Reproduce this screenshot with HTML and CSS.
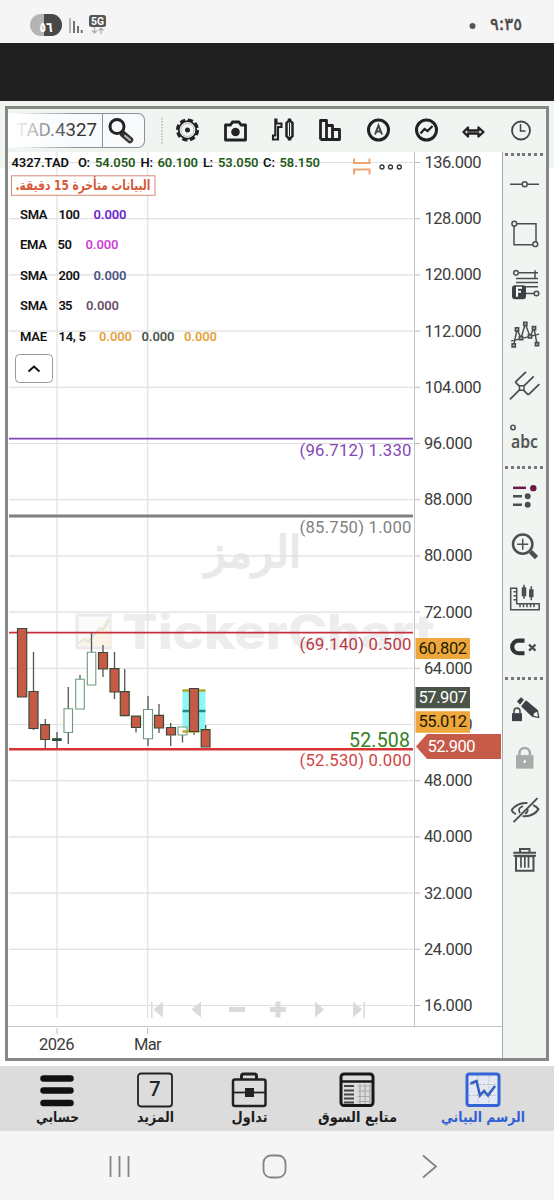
FILE: index.html
```html
<!DOCTYPE html>
<html lang="ar">
<head>
<meta charset="utf-8">
<title>TickerChart</title>
<link rel="stylesheet" href="styles.css">
</head>
<body>
<header class="status">
  <svg width="554" height="43" viewBox="0 0 554 43">
    <rect x="30" y="14" width="32" height="22" rx="11" fill="#b4b4b4"/>
    <path d="M44 14h7a11 11 0 0 1 0 22h-7z" fill="#484848"/>
    <text class="ar" x="39.5" y="32" font-size="14" font-weight="700" fill="#fff" textLength="13" lengthAdjust="spacingAndGlyphs">٥٦</text>
    <path d="M70 18v15" stroke="#b5b5b5" stroke-width="2"/>
    <path d="M74 21v12M78 26v7M81.7 30v3" stroke="#666" stroke-width="1.8"/>
    <rect x="89" y="15" width="17" height="12" rx="2.5" fill="#555"/>
    <text class="rb" x="91" y="25" font-size="11.5" font-weight="700" fill="#fff" textLength="13" lengthAdjust="spacingAndGlyphs">5G</text>
    <path d="M94.500 27v6m-2.500-2.500l2.500 2.500 2.500-2.500M101 34v-6m-2.500 2.500l2.500-2.500 2.500 2.500" fill="none" stroke="#aaa" stroke-width="1.200"/>
    <circle cx="472.500" cy="26" r="3" fill="#555"/>
    <text class="ar" x="490" y="30" font-size="17" fill="#444" stroke="#444" stroke-width=".5" textLength="32" lengthAdjust="spacingAndGlyphs">٩:٣٥</text>
  </svg>
</header>
<div class="band"></div>
<main class="stage">
  <section class="frame">
    <div class="toolbar">
      <div class="search">
        <span class="symbol">TAD.4327</span>
        <span class="find"><svg width="40" height="33" viewBox="0 0 40 33"><path d="M20 20l7 6" stroke="#333" stroke-width="6.500" stroke-linecap="round"/><path d="M22 21.800l5 4.200" stroke="#bbb" stroke-width="2" stroke-linecap="round"/><circle cx="14" cy="12.500" r="7" fill="#f6f8fb" stroke="#222" stroke-width="3"/></svg></span>
      </div>
      <svg class="tools" width="385" height="43" viewBox="153 109 385 43">
        <path d="M162 118v26" stroke="#999" stroke-dasharray="1.500 1.500"/>
        <g fill="none" stroke="#222">
          <circle cx="187.500" cy="130" r="10" stroke-width="3.200" stroke-dasharray="5.200 2.654"/><circle cx="187.500" cy="130" r="8.800" stroke-width="1.800"/><circle cx="187.500" cy="130" r="6.500" stroke="#bbb" stroke-width="1"/><circle cx="187.500" cy="130" r="2.500" fill="#222" stroke="none"/>
          <path d="M225.500 125h5l2-3h6.500l2 3h4.500v15h-20z" stroke-width="2.800" stroke-linejoin="round"/><circle cx="235.500" cy="132" r="4.300" fill="#222" stroke="none"/>
          <path d="M276.500 119.500v4h5v3.500h-3.500v12.500h-5v-4h2.300v-16z" stroke-width="2.100"/><path d="M289.500 118.500v3m0 16v3" stroke-width="3.500"/><path d="M286.500 123q3-4 6 0v13q-3 4-6 0z" stroke-width="2.500"/><path d="M289.500 123v13" stroke-width="1"/>
          <path d="M320.500 139.500v-19h6v19m0 0v-14h6v14m0 0v-10h7v10h-19" stroke-width="2.800" stroke-linejoin="round"/>
          <circle cx="378.500" cy="130" r="10" stroke-width="3"/><path d="M375 134.500l3.500-9 3.500 9M376 131.500h5" stroke-width="2" stroke="#444"/>
          <circle cx="426.500" cy="130" r="10" stroke-width="3"/><path d="M420.500 133.500l4-4.500 3 2 5-5" stroke-width="2.200"/>
          <path d="M463.500 132l4.500-4.500v3h10.500v-3l5 4.500-5 4.500v-3h-10.500v3z" fill="#ddd" stroke-width="2.300" stroke-linejoin="round"/>
          <circle cx="521" cy="130.500" r="9" stroke-width="1.800" stroke="#444"/><path d="M520.500 124v7h5" stroke-width="1.500" stroke="#444"/>
        </g>
      </svg>
    </div>
    <div class="work">
      <svg class="chart" width="494" height="906" viewBox="8 152 494 906">
        <g class="mark">
          <text class="ar" x="205" y="567" font-size="43" textLength="96" lengthAdjust="spacingAndGlyphs" stroke="#e9e9e9" stroke-width="2">الرمز</text>
          <path d="M77 615h33v33h-33z" fill="#fbfbfb" stroke="#eaeaea" stroke-width="3"/>
          <path d="M79 646l8-9 7 1 12-20 4 5v23z" fill="#fbf3e6"/>
          <path d="M79 643l5-4 4 3 12-14 3 2 6-11" fill="none" stroke="#e6e3dc" stroke-width="2"/>
          <text class="brand" x="122" y="649" font-size="48" textLength="313" lengthAdjust="spacingAndGlyphs">TickerChart</text>
        </g>
        <path class="grid" d="M57 152v866M147.700 152v866M9 162.500h404M9 218.700h404M9 274.900h404M9 331.100h404M9 387.300h404M9 443.500h404M9 499.700h404M9 555.900h404M9 612.100h404M9 668.300h404M9 724.500h404M9 780.700h404M9 836.900h404M9 893.100h404M9 949.300h404M9 1005.500h404"/>
        <path d="M414.500 152v874M8 1026.500h494" stroke="#c4c4c4" fill="none"/>
        <path d="M415 162.500h5M415 218.700h5M415 274.900h5M415 331.100h5M415 387.300h5M415 443.500h5M415 499.700h5M415 555.900h5M415 612.100h5M415 668.300h5M415 780.700h5M415 836.900h5M415 893.100h5M415 949.300h5M415 1005.500h5M57 1028v6M147.700 1028v6" stroke="#bbb" fill="none"/>
        <g class="scale">
          <text x="424.500" y="168" textLength="57">136.000</text><text x="424.500" y="224" textLength="57">128.000</text><text x="424.500" y="280.300" textLength="57">120.000</text><text x="424.500" y="336.500" textLength="57">112.000</text><text x="424.500" y="392.700" textLength="57">104.000</text>
          <text x="424" y="449" textLength="48.500">96.000</text><text x="424" y="505.200" textLength="48.500">88.000</text><text x="424" y="561.400" textLength="48.500">80.000</text><text x="424" y="617.600" textLength="48.500">72.000</text><text x="424" y="673.800" textLength="48.500">64.000</text><text x="424" y="730" textLength="48.500">56.000</text><text x="424" y="786.200" textLength="48.500">48.000</text><text x="424" y="842.400" textLength="48.500">40.000</text><text x="424" y="898.600" textLength="48.500">32.000</text><text x="424" y="954.800" textLength="48.500">24.000</text><text x="424" y="1011" textLength="48.500">16.000</text>
          <text x="39" y="1049.700" textLength="35.500">2026</text><text x="134" y="1049.700" textLength="27.500">Mar</text>
        </g>
        <g fill="#dadada">
          <path d="M151 1002h1.500v16h-1.500zM163 1001.500v16l-9.500-8zM201 1001.500v16l-9.500-8zM229 1007h16v5h-16zM270 1007h5.500v-5.500h5v5.500h5.500v5h-5.500v5.500h-5v-5.500h-5.500zM315 1001.500v16l9-8zM353 1001.500v16l9-8zM363.500 1002h1.500v16h-1.500z"/>
        </g>
        <g fill="none">
          <path d="M9 438.700h404" stroke="#8344b8" stroke-width="1.700"/>
          <path d="M9 516h404" stroke="#808080" stroke-width="2.800"/>
          <path d="M9 632.600h404" stroke="#c4303a" stroke-width="1.600"/>
        </g>
        <path d="M182.500 690h23v42h-23z" fill="#8ff6f6"/>
        <path d="M182.500 711h23" stroke="#278a8a" stroke-width="2.500"/>
        <path class="wick" d="M33.500 652v78M45.300 719v30M57 732v17M68.300 687v22M68.300 732v12M80 675v4M91.500 633v19M103 645v32M114.500 652v47M124.700 669v25M136 720v12.500M148 696v14M148 739v7M159 704v29M170.700 723v23M182.500 735v7.500M194 725v10M205.700 725v10"/>
        <g class="up"><path d="M64 708.700h8.500v23.800H64zM75.700 679.300h8.600v29.700h-8.600zM87.300 652.300h8.500v32.700h-8.500zM143.500 709.500h9v29.300h-9zM178 727h9v8h-9z"/></g>
        <path d="M182.500 690.500h23M182.500 731.500h17" stroke="#b8a52c" stroke-width="2.500"/>
        <g class="down"><path d="M17.500 628.500h9.200v68.500h-9.200zM29 691.500h9v37h-9zM40.700 724.700h8.800v14.800h-8.800zM98.500 652.500h9v16.500h-9zM110 668.700h9v23.300h-9zM120.300 691.700h8.900v24h-8.900zM131.500 716.200h9v11.300h-9zM154.500 715.300h9v12.700h-9zM166.500 727.500h9v7.500h-9zM189.500 688.500h9v43h-9zM201.200 729.700h8.800v17.300h-8.800z"/></g>
        <path d="M52 738.200h9.700v2.800H52z" fill="#28503a"/>
        <path d="M9 749.200h404" stroke="#d83232" stroke-width="2.600"/>
        <g class="level">
          <text x="299.500" y="455.500" fill="#8546b5" textLength="112">(96.712) 1.330</text>
          <text x="299.500" y="532.700" fill="#808080" textLength="112">(85.750) 1.000</text>
          <text x="299.500" y="649.500" fill="#b93848" textLength="112">(69.140) 0.500</text>
          <text x="299.500" y="765.700" fill="#cf4444" textLength="112">(52.530) 0.000</text>
          <text x="349" y="746.700" font-size="19.500" fill="#35801f" textLength="61">52.508</text>
        </g>
        <path d="M415.500 638h54.500v21h-54.500zM415.500 711.300h54.500v21.500h-54.500z" fill="#eea73c"/>
        <path d="M415.500 687h54.500v21.300h-54.500z" fill="#4b5448"/>
        <path d="M416 746.500l11-12.500h74v25h-74z" fill="#c75b49"/>
        <g class="scale">
          <text x="418.500" y="653.700" textLength="48.500" fill="#221a00">60.802</text><text x="418.500" y="727" textLength="48.500" fill="#221a00">55.012</text>
          <text x="418.500" y="702.500" textLength="48.500" class="light">57.907</text><text x="427.500" y="751.500" textLength="48" class="light">52.900</text>
        </g>
        <g class="legend">
          <text x="11.500" y="167" textLength="57.500">4327.TAD</text><text x="78" y="167" textLength="12">O:</text><text x="140.500" y="167" textLength="12.500">H:</text><text x="203" y="167" textLength="10">L:</text><text x="263" y="167" textLength="12">C:</text>
          <g fill="#245c17"><text x="95" y="167" textLength="40.500">54.050</text><text x="157.500" y="167" textLength="40.500">60.100</text><text x="218" y="167" textLength="40.500">53.050</text><text x="279.500" y="167" textLength="40.500">58.150</text></g>
          <text x="20" y="218.500" textLength="27.500">SMA</text><text x="58.500" y="218.500" textLength="21.500">100</text><text x="93.500" y="218.500" textLength="33" fill="#6a22d0">0.000</text>
          <text x="20" y="249.300" textLength="27">EMA</text><text x="57.500" y="249.300" textLength="14.500">50</text><text x="85.500" y="249.300" textLength="33" fill="#cf3fd3">0.000</text>
          <text x="20" y="280" textLength="27.500">SMA</text><text x="58.500" y="280" textLength="21.500">200</text><text x="93.500" y="280" textLength="33" fill="#4a5484">0.000</text>
          <text x="20" y="310.300" textLength="27.500">SMA</text><text x="58.500" y="310.300" textLength="14">35</text><text x="86" y="310.300" textLength="33" fill="#66506a">0.000</text>
          <text x="20" y="341" textLength="27">MAE</text><text x="58.500" y="341" textLength="27.500">14, 5</text><text x="99" y="341" textLength="33" fill="#e5a23e">0.000</text><text x="141.500" y="341" textLength="33" fill="#4b5448">0.000</text><text x="184" y="341" textLength="33" fill="#e5a23e">0.000</text>
        </g>
        <rect x="11.500" y="175.800" width="143.500" height="19.500" fill="#fff" stroke="#d58a72"/>
        <text class="ar" x="150.500" y="190" direction="rtl" font-size="14" font-weight="700" fill="#d65a38" textLength="135" lengthAdjust="spacingAndGlyphs">البيانات متأخرة 15 دقيقة.</text>
        <rect x="15.500" y="354.500" width="37" height="28" rx="4" fill="#fff" stroke="#999"/>
        <path d="M28.500 371.500l5.500-5 5.500 5" fill="none" stroke="#111" stroke-width="2"/>
        <path d="M354 158.500v4.500h15.500v-4.500M354 174.500v-5h15.500v5" fill="none" stroke="#eea574" stroke-width="2"/>
        <g fill="#fff" stroke="#333" stroke-width="1.300"><circle cx="382" cy="167" r="2"/><circle cx="390.500" cy="167" r="2"/><circle cx="399.300" cy="167" r="2"/></g>
      </svg>
      <aside class="side">
        <i class="dots first"></i>
        <svg class="tool" viewBox="1 0 43 50"><path d="M8 25h12M25.500 25H37"/><circle cx="22.700" cy="25" r="2.500"/></svg>
        <svg class="tool" viewBox="1 0 43 50"><path d="M12 14.500h22v21H12z"/><circle class="fillbg" cx="12.300" cy="14.500" r="2.400"/><circle class="fillbg" cx="33.300" cy="35" r="2.400"/></svg>
        <svg class="tool" viewBox="1 1 43 50"><path d="M16.500 13.700H36M33 11v8M14 19.300h22M14 23.300h22M21 27.500h15M23 34.300h9"/><circle cx="14" cy="13.700" r="2.300"/><circle cx="34.500" cy="34.300" r="2.300"/><rect x="10" y="26" width="14" height="14" rx="3" fill="#3c4144" stroke="none"/><path d="M15 37.500v-9h5M15 32.700h4" stroke="#fff" stroke-width="2"/></svg>
        <svg class="tool" viewBox="1 1 43 50"><path d="M9 32l28-7" /><path d="M11.700 36.300L15 20.300 19 29l4.300-14.300L28 27.300 32 19l3 16"/><path stroke-width="1.800" class="fillbg" d="M10.200 34.800h3v3h-3zM13.500 18.800h3v3h-3zM17.500 27.500h3v3h-3zM21.800 13.200h3v3h-3zM26.500 25.800h3v3h-3zM30.500 17.500h3v3h-3zM33.500 33.500h3v3h-3z"/></svg>
        <svg class="tool" viewBox="1 1 43 50"><path stroke-width="1.800" d="M8 40.300l10-10M22 26.700l9.700-9.400M13.300 23L24 12.700M26.300 35.700L37.300 25M13.300 23l13 12.700"/><path class="fillbg" d="M17.500 26.700h4.500v4.500h-4.500z"/></svg>
        <svg class="tool" viewBox="1 1 43 50"><circle cx="11" cy="18.300" r="2.200"/><text class="abc" x="9" y="38.700" textLength="27" lengthAdjust="spacingAndGlyphs">abc</text></svg>
        <i class="dots"></i>
        <svg class="tool" viewBox="1 1 43 50"><path d="M11 16.700h13" stroke="#681c4c" stroke-width="2.500"/><circle cx="31.300" cy="17" r="3.200" fill="#681c4c" stroke="none"/><path d="M11 25.200h9M11 33.700h9" stroke-width="2.500"/><path d="M25.700 25.200h.01M25.700 33.700h.01" stroke-width="6" stroke-linecap="round"/></svg>
        <svg class="tool" viewBox="1 1 43 50"><path d="M28.500 30.500l6 6" stroke-width="4.500"/><circle cx="20.700" cy="23" r="9.700" stroke-width="2.500"/><path d="M20.700 17.500v11M15.200 23h11" stroke-width="1.500"/></svg>
        <svg class="tool" viewBox="1 1 43 50"><path d="M8.700 17h6v15.500h22.500v6H8.700zM11.500 20.500h3M11.500 24.500h3M11.500 28.500h3M18 33v3M21.500 33v3M25 33v3M28.500 33v3M32 33v3"/><path d="M22 13.700v14M29.300 15v14"/><path d="M22 16v9M29.300 18v8" stroke-width="4.500"/></svg>
        <svg class="tool" viewBox="1 1 43 50"><path d="M22.500 19.500h-6a6.300 6.300 0 0 0 0 12.600h6" stroke="#303437" stroke-width="4.200"/><path d="M27 23.500l6.500 6M33.500 23.500l-6.500 6" stroke-width="2.300"/></svg>
        <i class="dots last"></i>
        <svg class="tool" viewBox="1 1 43 50"><path d="M15 17l4-4 3 2.500-4 5z" fill="#3b4145" stroke="none"/><path d="M19 22l5-6 12 10 1.500 8-7.500-1.500z" fill="#3b4145" stroke="none"/><path d="M32 29l3-1.500 1 5-4.500-1z" fill="#f1f5f1" stroke="none"/><path d="M10 29h10v8H10z" fill="#3b4145" stroke="none"/><path d="M12 29v-2a3 3 0 0 1 6 0v2" stroke-width="1.600"/></svg>
        <svg class="tool" viewBox="1 1 43 50"><path d="M14 21h17.500v13.500H14z" fill="#a9aba9" stroke="none"/><path d="M17.500 22v-3a5.200 5.200 0 0 1 10.400 0v3" stroke="#a9aba9" stroke-width="2.500"/><circle cx="22.700" cy="27.500" r="1.300" fill="#fff" stroke="none"/></svg>
        <svg class="tool" viewBox="1 1 43 50"><path d="M9.500 26q6-8 16-7M31 21q3 1 5.500 4-5 8-16 7M14 30q-3-1-4.500-4" stroke-width="2"/><path d="M18 29q-3-5 3-7M25 24q2 3-2 6" stroke-width="1.800"/><path d="M11.500 38l24-24" stroke-width="2"/></svg>
        <svg class="tool" viewBox="1 1 43 50"><path d="M11.300 18.500H34M18 18v-3.200h9.500V18" stroke-width="2"/><path d="M14 22v14.500h17.500V22zM11.500 21.500h22.500" stroke-width="2"/><path d="M19 22v11.500M22.800 22v11.500M26.500 22v11.500" stroke-width="1.700"/></svg>
      </aside>
    </div>
  </section>
</main>
<nav class="tabs">
  <a><svg width="36" height="36" viewBox="0 0 36 36"><path d="M4.500 6.500h27M4.500 18.500h27M4.500 31h27" stroke="#111" stroke-width="6.500" stroke-linecap="round"/></svg><svg class="cap" width="90" height="24"><text x="45.500" y="14" textLength="43" lengthAdjust="spacingAndGlyphs">حسابي</text></svg></a>
  <a><svg width="36" height="36" viewBox="0 0 36 36"><rect x="1" y="1.500" width="34" height="33" rx="3" fill="none" stroke="#222" stroke-width="1.800"/><text class="seven" x="18" y="23.500">7</text></svg><svg class="cap" width="82" height="24"><text x="41.500" y="14" textLength="37" lengthAdjust="spacingAndGlyphs">المزيد</text></svg></a>
  <a><svg width="36" height="36" viewBox="0 0 36 36" fill="none" stroke="#222"><rect x="2" y="7.500" width="32.500" height="26.500" rx="2" stroke-width="2.500"/><path d="M10.500 7V4q0-2 2-2h11q2 0 2 2v3" stroke-width="3"/><path d="M2 20.500h32" stroke-width="1.800"/><path d="M14 16h9v9h-9z" fill="#222" stroke="none"/></svg><svg class="cap" width="90" height="24"><text x="45.500" y="14" textLength="36" lengthAdjust="spacingAndGlyphs">تداول</text></svg></a>
  <a><svg width="36" height="36" viewBox="0 0 36 36" fill="none"><rect x="2" y="2" width="32" height="31.500" rx="3" stroke="#181818" stroke-width="3"/><path d="M3 9.500h30" stroke="#181818" stroke-width="2.500"/><path d="M5 14h10M5 18.500h10M5 22.500h10M5 26.500h10M5 30.500h10" stroke="#444" stroke-width="2"/><path d="M18.500 14h13M18.500 19h13M18.500 24.500h13M18.500 29.500h13M21 12v20M26 12v20M31 12v20" stroke="#aaa" stroke-width="1.200"/></svg><svg class="cap" width="110" height="24"><text x="55.500" y="14" textLength="79" lengthAdjust="spacingAndGlyphs">متابع السوق</text></svg></a>
  <a class="on"><svg width="36" height="36" viewBox="0 0 36 36" fill="none"><rect x="2" y="2" width="32" height="31.500" rx="2.500" fill="#e4e8f2" stroke="#3564d8" stroke-width="3"/><path d="M4 12.500h28M4 23.500h28M13 4v28M24 4v28" stroke="#b4bccb" stroke-dasharray="2 1.500"/><path d="M5.500 11.500l6-2.500 3.500 14.500 4-4.500 4 4.500 7-9.500" stroke="#345fbe" stroke-width="2.500"/></svg><svg class="cap" width="120" height="24"><text x="60" y="14" textLength="84" lengthAdjust="spacingAndGlyphs">الرسم البياني</text></svg></a>
</nav>
<footer class="sysnav">
  <svg width="554" height="69" viewBox="0 1131 554 69" fill="none" stroke="#848484" stroke-width="1.800"><path d="M110.500 1156v21M119.500 1156v21M128.500 1156v21M423 1155.500l13 11-13 11"/><rect x="263.500" y="1155.500" width="22" height="22" rx="7.500"/></svg>
</footer>
</body>
</html>
```
FILE: styles.css
```css
* { box-sizing: border-box; }
body { margin: 0; width: 554px; background: #fff; font-family: Roboto, sans-serif; }
svg { display: block; flex: none; }
.status { height: 43px; background: #f5f5f5; }
.band { height: 58px; background: #202020; }
.stage { height: 965px; padding: 5px 5px 0; background: linear-gradient(#f1f5f1 0 67px, #fff 67px); }
.frame { width: 544px; height: 955px; border: 3px solid #868886; background: #fff; }
.toolbar { display: flex; height: 43px; background: #f1f5f1; }
.search { display: flex; width: 137px; height: 35px; margin-top: 4px; border: 1px solid #8a919c; border-left: 0; border-radius: 0 7px 7px 0; background: #f8fafc; position: relative; }
.search::before { content: ""; position: absolute; left: 0; top: -1px; width: 68px; height: 35px; background: linear-gradient(90deg, #fff 8%, rgba(255,255,255,0)); }
.symbol { width: 94px; padding-left: 8px; line-height: 33px; font-size: 18.7px; color: #333; white-space: nowrap; }
.find { flex: 1; border-left: 1px solid #8a919c; }
.tools { margin-left: 8px; }
.work { display: flex; }
.side { display: flex; flex-direction: column; width: 44px; height: 906px; border-left: 1px solid #aaa; background: #f1f5f1; }
.dots { flex: none; width: 38px; height: 3px; margin: 5px 0 3px 2px; background: repeating-linear-gradient(90deg, #777 0 3px, transparent 3px 5.8px); }
.dots.first { margin: 1px 0 3px 2px; }
.dots.last { margin: 4px 0 5px 2px; }
.tool { width: 43px; height: 50.25px; fill: none; stroke: #4b4f50; stroke-width: 1.5; }
.fillbg { fill: #f1f5f1; }
.abc { font: 600 18.5px "Noto Sans", sans-serif; fill: #555; stroke: none; }
.ar { font-family: "DejaVu Sans", sans-serif; }
.rb { font-family: Roboto, sans-serif; }
.mark { fill: #e9e9e9; }
.brand { font-family: Inter, "Open Sans", sans-serif; font-weight: 800; fill: #ededed; }
.grid { stroke: #e0e0e0; stroke-width: 1.2; fill: none; }
.scale { font-size: 16.5px; fill: #3c3c3c; }
.light { fill: #fff; }
.level { font-size: 16.7px; }
.wick { stroke: #555; stroke-width: 1.3; fill: none; }
.up { fill: #fff; stroke: #6b9b7c; stroke-width: 1.1; }
.down { fill: #c65a47; stroke: #3c4a34; stroke-width: 1.2; }
.legend { font-size: 13px; font-weight: 600; fill: #111; }
.tabs { display: grid; grid-template-columns: 114px 82px 106px 110px 142px; height: 65px; background: #dcdcdc; padding-top: 6px; }
.tabs a { display: flex; flex-direction: column; align-items: center; color: #1c1c1c; }
.cap { overflow: visible; }
.cap text { font: 700 14.5px "DejaVu Sans", sans-serif; fill: currentColor; text-anchor: middle; }
.tabs .on { color: #2f60d4; }
.seven { font: 500 20px Roboto, sans-serif; text-anchor: middle; fill: #222; }
.sysnav { height: 69px; background: #f5f5f5; }
```
